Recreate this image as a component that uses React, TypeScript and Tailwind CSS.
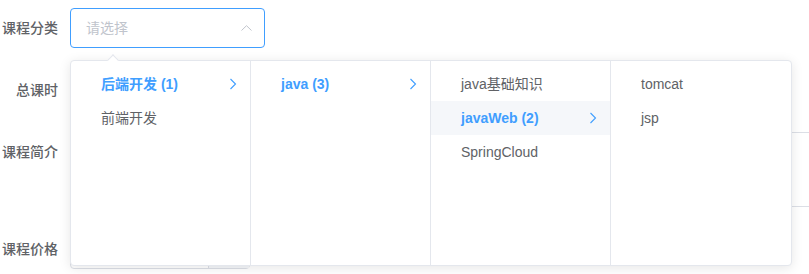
import React from "react";

const FONT = "font-['Liberation_Sans','Noto_Sans_CJK_SC',sans-serif]";

function ChevronRight() {
  return (
    <svg width="8" height="12" viewBox="0 0 8 12" className="shrink-0">
      <path d="M1.5 1 L6.5 6 L1.5 11" fill="none" stroke="#409EFF" strokeWidth="1.1" />
    </svg>
  );
}

type Node = { label: string; active?: boolean; arrow?: boolean; hover?: boolean };

const menus: Node[][] = [
  [
    { label: "后端开发 (1)", active: true, arrow: true },
    { label: "前端开发" },
  ],
  [{ label: "java (3)", active: true, arrow: true }],
  [
    { label: "java基础知识" },
    { label: "javaWeb (2)", active: true, arrow: true, hover: true },
    { label: "SpringCloud" },
  ],
  [{ label: "tomcat" }, { label: "jsp" }],
];

function Label({ text }: { text: string }) {
  return (
    <div className="w-[70px] shrink-0 pr-3 text-right text-[14px] leading-[40px] font-medium text-[#606266]">
      {text}
    </div>
  );
}

export default function App() {
  return (
    <div className={`relative w-[809px] h-[274px] overflow-hidden bg-white ${FONT}`}>
      <div className="flex flex-col pt-2 w-[900px]">
        <div className="flex h-10">
          <Label text="课程分类" />
          <div className="relative flex h-10 w-[195px] items-center rounded border border-[#409EFF] pl-[15px] pr-3">
            <span className="flex-1 text-[14px] text-[#C0C4CC]">请选择</span>
            <svg width="11" height="6" viewBox="0 0 11 6">
              <path d="M0.5 5.5 L5.5 0.7 L10.5 5.5" fill="none" stroke="#C0C4CC" strokeWidth="1" />
            </svg>
          </div>
        </div>
        <div className="mt-[22px] flex h-10">
          <Label text="总课时" />
          <div className="h-10 w-[180px] rounded border border-[#DCDFE6]" />
        </div>
        <div className="mt-[22px] flex">
          <Label text="课程简介" />
          <div className="h-[75px] w-[780px] rounded border border-[#DCDFE6]" />
        </div>
        <div className="mt-[22px] flex h-10">
          <Label text="课程价格" />
          <div className="flex h-10 w-[180px] rounded border border-[#DCDFE6]">
            <div className="flex-1" />
            <div className="w-[41px] border-l border-[#DCDFE6] bg-[#F5F7FA]" />
          </div>
        </div>
      </div>

      <div className="absolute left-[70px] top-[60px] rounded border border-[#E4E7ED] bg-white shadow-[0_2px_12px_0_rgba(0,0,0,0.1)]">
        <div className="absolute -top-[5px] left-[38px] h-2 w-2 rotate-45 border-l border-t border-[#E4E7ED] bg-white" />
        <div className="flex">
          {menus.map((menu, i) => (
            <div
              key={i}
              className={`h-[204px] w-[180px] py-[6px] ${i < menus.length - 1 ? "border-r border-[#E4E7ED]" : ""}`}
            >
              {menu.map((n) => (
                <div
                  key={n.label}
                  className={`flex h-[34px] items-center justify-between pl-[30px] pr-[13px] text-[14px] ${
                    n.hover ? "bg-[#F5F7FA]" : ""
                  } ${n.active ? "font-bold text-[#409EFF]" : "text-[#606266]"}`}
                >
                  <span>{n.label}</span>
                  {n.arrow && <ChevronRight />}
                </div>
              ))}
            </div>
          ))}
        </div>
      </div>
    </div>
  );
}
